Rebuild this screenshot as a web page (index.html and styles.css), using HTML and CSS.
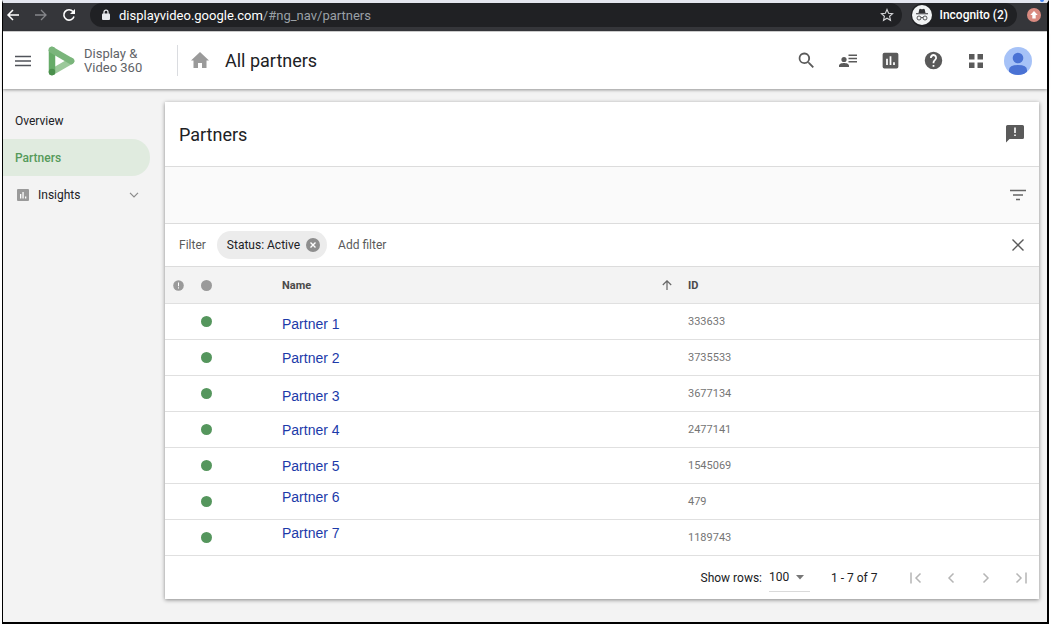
FILE: index.html
```
<!DOCTYPE html>
<html lang="en">
<head>
  <meta charset="utf-8">
  <title>Display &amp; Video 360 - Partners</title>
  <link rel="stylesheet" href="styles.css">
</head>
<body>

  <div class="window">
    <span class="tab-mark"></span>

    <!-- Browser bar -->
    <div class="browser">
      <div class="nav-buttons">
        <button class="plain" aria-label="Back"><svg width="14" height="14" viewBox="0 0 14 14" fill="none" stroke="#fff" stroke-width="1.5"><path d="M13 7H2M7 2 2 7l5 5"/></svg></button>
        <button class="plain" aria-label="Forward"><svg width="14" height="14" viewBox="0 0 14 14" fill="none" stroke="#85868a" stroke-width="1.3"><path d="M1 7h11M7 2l5 5-5 5"/></svg></button>
        <button class="plain" aria-label="Reload"><svg width="14" height="14" viewBox="0 0 14 14"><path d="M12 8.500A5.200 5.200 0 1 1 11 3.500" fill="none" stroke="#fff" stroke-width="1.6"/><path d="M13 1v5H8z" fill="#fff"/></svg></button>
      </div>
      <div class="address">
        <svg width="10" height="12" viewBox="0 0 10 12"><rect x="1" y="4.5" width="8" height="6.5" rx="1" fill="#e8eaed"/><path d="M3 5V3.2a2 2 0 0 1 4 0V5" fill="none" stroke="#e8eaed" stroke-width="1.3"/></svg>
        <p class="url"><span class="host">displayvideo.google.com</span>/#ng_nav/partners</p>
        <button class="plain" aria-label="Bookmark"><svg width="14" height="14" viewBox="0 0 14 14"><path d="M7 1.5l1.6 3.7 4 .4-3 2.7.9 4L7 10.2l-3.5 2.1.9-4-3-2.7 4-.4z" fill="none" stroke="#d5d6d9" stroke-width="1.1"/></svg></button>
      </div>
      <button class="incognito">
        <svg width="20" height="20" viewBox="0 0 20 20"><circle cx="10" cy="10" r="10" fill="#f1f3f4"/><path d="M6.5 8 7.3 4.6q.3-1 1.3-.7l1.4.4 1.4-.4q1-.3 1.3.7L13.5 8zM4 8.300h12v1H4z" fill="#303134"/><g fill="none" stroke="#303134" stroke-width=".8"><circle cx="7" cy="13" r="2"/><circle cx="13" cy="13" r="2"/><path d="M9 12.700q1-.6 2 0"/></g></svg>
        Incognito (2)
      </button>
      <button class="plain update" aria-label="Update"><svg width="14" height="14" viewBox="0 0 14 14"><circle cx="7" cy="7" r="7" fill="#d98a80"/><path d="M7 3 3.300 7h2v3.500h3.400V7h2z" fill="#fff"/></svg></button>
    </div>

    <!-- App header -->
    <header class="header">
      <button class="plain" aria-label="Menu"><svg width="16" height="12" viewBox="0 0 16 12"><path d="M0 1.500h16M0 6h16M0 10.500h16" stroke="#50535a" stroke-width="1.700"/></svg></button>
      <svg class="logo" width="27" height="30" viewBox="0 0 27 30">
        <path d="M23 15 4 26" stroke="#9cc99b" stroke-width="6.500" stroke-linecap="round"/>
        <path d="M4 4v22" stroke="#66ab68" stroke-width="6.500" stroke-linecap="round"/>
        <path d="M4 4l19 11" stroke="#7ab57b" stroke-width="6.500" stroke-linecap="round"/>
        <circle cx="4" cy="26" r="3.200" fill="#4a8f4c"/>
      </svg>
      <p class="product">Display &amp;<br>Video 360</p>
      <a href="#" class="home" aria-label="Home"><svg width="18" height="17" viewBox="0 0 18 17"><path d="M9 0 0 8.500h2.500V16h4.500v-5h4v5h4.500V8.500H18z" fill="#9a9a9a"/></svg></a>
      <h1>All partners</h1>
      <div class="tools">
        <button class="plain" aria-label="Search"><svg width="21" height="21" viewBox="0 0 24 24"><path d="M15.5 14h-.79l-.28-.27A6.500 6.500 0 1 0 13.700 14.430l.27.28v.79l5 5L20.490 19zm-6 0a4.500 4.500 0 1 1 0-9 4.500 4.500 0 0 1 0 9z"/></svg></button>
        <button class="plain" aria-label="Contacts"><svg width="18" height="14" viewBox="0 0 18 14"><circle cx="5" cy="5.500" r="2.600"/><path d="M0 13v-1.500C0 9.800 3 9 5 9s5 .8 5 2.500V13zM9.500 .5H18V2H9.500zM9.500 3.800H18v1.500H9.500zM9.500 7.100H18v1.500H9.500z"/></svg></button>
        <button class="plain" aria-label="Reports"><svg width="21" height="21" viewBox="0 0 24 24"><path d="M19 3H5a2 2 0 0 0-2 2v14a2 2 0 0 0 2 2h14a2 2 0 0 0 2-2V5a2 2 0 0 0-2-2zM9 17H7v-7h2zm4 0h-2V7h2zm4 0h-2v-3h2z"/></svg></button>
        <button class="plain" aria-label="Help"><svg width="21" height="21" viewBox="0 0 24 24"><path d="M12 2a10 10 0 1 0 0 20 10 10 0 0 0 0-20zm1 17h-2v-2h2zm2.070-7.750-.9.920C13.450 12.900 13 13.500 13 15h-2v-.5c0-1.100.45-2.100 1.170-2.830l1.240-1.260A2 2 0 1 0 10 9H8a4 4 0 1 1 7.070 2.250z"/></svg></button>
        <button class="plain" aria-label="Apps"><svg width="14" height="14" viewBox="0 0 14 14"><path d="M0 0h5.500v5.500H0zM8.500 0H14v5.500H8.500zM0 8.500h5.500V14H0zM8.500 8.500H14V14H8.500z"/></svg></button>
        <button class="plain" aria-label="Account"><svg width="28" height="28" viewBox="0 0 28 28"><circle cx="14" cy="14" r="14" fill="#a6c2f7"/><circle cx="14" cy="11" r="5.300" fill="#4a72d4"/><path d="M5 24.700V23q0-5 9-5t9 5v1.700a14 14 0 0 1-18 0z" fill="#4a72d4"/></svg></button>
      </div>
    </header>

    <div class="content">
      <nav class="sidebar">
        <a href="#">Overview</a>
        <a href="#" class="active">Partners</a>
        <a href="#" class="group">
          <svg width="12" height="12" viewBox="0 0 12 12"><rect width="12" height="12" rx="1" fill="#9a9a9a"/><path d="M3 5h1.300v4.500H3zM5.400 3h1.300v6.500H5.400zM8 7.500h1.300v2H8z" fill="#fff"/></svg>
          Insights
          <svg class="chevron" width="10" height="6" viewBox="0 0 10 6"><path d="M1 .8 5 4.800 9 .8" fill="none" stroke="#8a8a8a" stroke-width="1.200"/></svg>
        </a>
      </nav>

      <main class="card">
        <div class="card-title">
          <h2>Partners</h2>
          <button class="plain" aria-label="Send feedback"><svg width="18" height="18" viewBox="0 0 18 18"><path d="M1.500 0h15A1.500 1.500 0 0 1 18 1.500v11a1.500 1.500 0 0 1-1.500 1.500H3.500L0 17.500v-16A1.500 1.500 0 0 1 1.500 0z" fill="#5a5a5a"/><path d="M8.200 2.500h1.600v5.500H8.200zM8.200 9.500h1.600v1.600H8.200z" fill="#fff"/></svg></button>
        </div>
        <div class="toolbar">
          <button class="plain" aria-label="Show filters"><svg width="16" height="12" viewBox="0 0 16 12"><path d="M0 1.500h16M3 6h10M6 10.500h4" stroke="#666" stroke-width="1.500"/></svg></button>
        </div>
        <div class="filters">
          <span>Filter</span>
          <span class="chip">Status: Active
            <button class="plain" aria-label="Remove filter"><svg width="14" height="14" viewBox="0 0 14 14"><circle cx="7" cy="7" r="7" fill="#8e8e8e"/><path d="M4.500 4.500l5 5M9.500 4.500l-5 5" stroke="#fff" stroke-width="1.400"/></svg></button>
          </span>
          <button class="plain add">Add filter</button>
          <button class="plain close" aria-label="Close filters"><svg width="12" height="12" viewBox="0 0 12 12"><path d="M.5.500l11 11M11.500.500l-11 11" stroke="#5a5a5a" stroke-width="1.400"/></svg></button>
        </div>

        <table>
          <thead>
            <tr>
              <th class="col-alert"><svg width="11" height="11" viewBox="0 0 11 11"><circle cx="5.500" cy="5.500" r="5.300" fill="#9a9a9a"/><path d="M5 2.500h1v3.800H5zM5 7.300h1v1.200H5z" fill="#fff"/></svg></th>
              <th class="col-status"><span class="dot"></span></th>
              <th class="col-name">Name</th>
              <th class="col-sort"><svg width="10" height="10" viewBox="0 0 10 10"><path d="M5 10V1M.8 5 5 .8 9.200 5" fill="none" stroke="#666" stroke-width="1.200"/></svg></th>
              <th>ID</th>
            </tr>
          </thead>
          <tbody>
            <tr><td></td><td><span class="dot on"></span></td><td class="low" colspan="2"><a href="#">Partner 1</a></td><td>333633</td></tr>
            <tr><td></td><td><span class="dot on"></span></td><td colspan="2"><a href="#">Partner 2</a></td><td>3735533</td></tr>
            <tr><td></td><td><span class="dot on"></span></td><td class="low" colspan="2"><a href="#">Partner 3</a></td><td>3677134</td></tr>
            <tr><td></td><td><span class="dot on"></span></td><td colspan="2"><a href="#">Partner 4</a></td><td>2477141</td></tr>
            <tr><td></td><td><span class="dot on"></span></td><td colspan="2"><a href="#">Partner 5</a></td><td>1545069</td></tr>
            <tr><td></td><td><span class="dot on"></span></td><td class="high" colspan="2"><a href="#">Partner 6</a></td><td>479</td></tr>
            <tr><td></td><td><span class="dot on"></span></td><td class="high" colspan="2"><a href="#">Partner 7</a></td><td>1189743</td></tr>
          </tbody>
        </table>

        <div class="pager">
          <label for="rows">Show rows:</label>
          <div class="select">
            <select id="rows"><option>50</option><option selected>100</option></select>
            <svg width="8" height="5" viewBox="0 0 8 5"><path d="M0 0h8L4 4.500z" fill="#777"/></svg>
          </div>
          <span class="range">1 - 7 of 7</span>
          <div class="pages">
            <button class="plain" aria-label="First page"><svg width="12" height="12" viewBox="0 0 12 12"><path d="M1 .5v11M10.500 1.500 6 6l4.500 4.500"/></svg></button>
            <button class="plain" aria-label="Previous page"><svg width="12" height="12" viewBox="0 0 12 12"><path d="M8.500 1.500 4 6l4.500 4.500"/></svg></button>
            <button class="plain" aria-label="Next page"><svg width="12" height="12" viewBox="0 0 12 12"><path d="M3.500 1.500 8 6l-4.500 4.500"/></svg></button>
            <button class="plain" aria-label="Last page"><svg width="12" height="12" viewBox="0 0 12 12"><path d="M11 .5v11M1.500 1.500 6 6l-4.500 4.500"/></svg></button>
          </div>
        </div>
      </main>
    </div>
  </div>

</body>
</html>
```
FILE: styles.css
```
* {
  padding: 0;
  margin: 0;
  box-sizing: border-box;
}

body {
  background: #fff;
  padding: 0 4px 4px 2px;
  font-family: Roboto, sans-serif;
  font-size: 12px;
  color: #202124;
}

svg {
  display: block;
  flex: none;
}

a {
  color: inherit;
  text-decoration: none;
}

.plain {
  border: 0;
  background: none;
  font: inherit;
  color: inherit;
  cursor: pointer;
}

.window {
  position: relative;
  min-height: calc(100vh - 4px);
  border-top: 3px solid #e4e6ef;
  border-left: 1px solid #000;
  border-right: 2px solid #000;
  border-bottom: 2px solid #000;
  background: #f3f3f3;
}

/* bottom edge of the tab search button */
.tab-mark {
  position: absolute;
  top: -3px;
  right: 3px;
  width: 4px;
  height: 2px;
  border-radius: 0 0 2px 2px;
  background: #4285f4;
}

/* browser bar */
.browser {
  display: flex;
  align-items: center;
  height: 29px;
  padding: 0 6px 4px 3px;
  border-bottom: 1px solid #dadada;
  background: #35363a;
}

.nav-buttons {
  display: flex;
  gap: 14px;
  width: 84px;
}

.address {
  display: flex;
  align-items: center;
  flex: 1;
  height: 24px;
  padding: 0 8px 0 11px;
  border-radius: 12px;
  background: #202124;
}

.url {
  flex: 1;
  margin-left: 8px;
  color: #9aa0a6;
  font-size: 13px;
}

.host {
  color: #fff;
}

.incognito {
  display: flex;
  align-items: center;
  gap: 7px;
  height: 24px;
  margin: 0 10px 0 9px;
  padding: 0 9px 0 1px;
  border: 0;
  border-radius: 12px;
  background: #202124;
  color: #fff;
  font-family: Roboto, sans-serif;
  font-size: 12px;
  font-weight: 500;
}

/* app header */
.header {
  position: relative;
  display: flex;
  align-items: center;
  height: 57px;
  padding: 0 15px 0 12px;
  background: #fff;
  box-shadow: 0 1px 3px rgba(0, 0, 0, 0.4);
}

.logo {
  margin: 0 9px 0 17px;
}

.product {
  width: 93px;
  color: #5f6368;
  font-size: 13px;
  line-height: 14px;
}

.home {
  padding: 7px 0 7px 13px;
  border-left: 1px solid #dadce0;
}

.header h1 {
  flex: 1;
  margin-left: 16px;
  font-size: 18px;
  font-weight: 400;
}

.tools {
  display: flex;
  align-items: center;
  justify-content: space-between;
  width: 240px;
  fill: #5a5a5a;
}

.tools button {
  display: flex;
  align-items: center;
  justify-content: center;
  width: 28px;
  height: 28px;
}

.content {
  display: flex;
  padding: 13px 8px 23px 0;
}

/* sidebar */
.sidebar {
  width: 162px;
  font-size: 12px;
}

.sidebar a {
  display: flex;
  align-items: center;
  height: 37px;
  margin-right: 15px;
  padding: 0 11px 0 12px;
}

.sidebar .active {
  border-radius: 0 18px 18px 0;
  background: #e0ebdf;
  color: #559a5a;
  font-weight: 500;
}

.sidebar .group {
  gap: 9px;
  padding-left: 14px;
}

.chevron {
  margin-left: auto;
}

/* partners card */
.card {
  flex: 1;
  background: #fff;
  box-shadow: 0 1px 4px rgba(0, 0, 0, 0.45);
}

.card-title,
.toolbar,
.filters {
  display: flex;
  align-items: center;
  border-bottom: 1px solid #dcdcdc;
  padding: 0 15px 0 14px;
}

.card-title {
  justify-content: space-between;
  height: 65px;
}

.card-title h2 {
  font-size: 18px;
  font-weight: 400;
}

.toolbar {
  justify-content: flex-end;
  height: 57px;
  padding-right: 13px;
  background: #fafafa;
}

.filters {
  height: 43px;
  color: #5a5a5a;
}

.chip {
  display: flex;
  align-items: center;
  gap: 6px;
  height: 28px;
  margin: 0 11px;
  padding: 0 7px 0 10px;
  border-radius: 14px;
  background: #ececec;
  color: #202124;
}

.close {
  margin-left: auto;
}

table {
  width: 100%;
  table-layout: fixed;
  border-collapse: separate;
  border-spacing: 0;
  font-size: 11px;
}

th,
td {
  height: 36px;
  border-bottom: 1px solid #e0e0e0;
  text-align: left;
  vertical-align: middle;
}

th {
  height: 37px;
  background: #f3f3f3;
  color: #4a4a4a;
}

td {
  color: #757575;
}

td a {
  display: block;
  color: #1c3aa9;
  font-family: "Liberation Sans", Arial, sans-serif;
  font-size: 14px;
  line-height: 20px;
}

.low {
  padding-top: 4px;
}

.high {
  padding-bottom: 10px;
}

.col-alert {
  width: 36px;
  padding-left: 8px;
}

.col-status {
  width: 81px;
}

.col-sort {
  width: 26px;
}

.col-name {
  width: 380px;
}

.dot {
  display: block;
  width: 11px;
  height: 11px;
  border-radius: 50%;
  background: #9a9a9a;
}

.dot.on {
  background: #55965d;
}

.pager {
  display: flex;
  align-items: center;
  justify-content: flex-end;
  height: 43px;
  padding: 0 12px;
}

.select {
  display: flex;
  align-items: center;
  width: 41px;
  height: 28px;
  margin: 0 21px 0 7px;
  padding-right: 6px;
  border-bottom: 1px solid #dadada;
}

.select select {
  flex: 1;
  min-width: 0;
  appearance: none;
  border: 0;
  background: none;
  color: inherit;
  font: inherit;
}

.range {
  width: 79px;
}

.pages {
  display: flex;
  gap: 23px;
  fill: none;
  stroke: #b5b5b5;
  stroke-width: 1.5;
}
```
